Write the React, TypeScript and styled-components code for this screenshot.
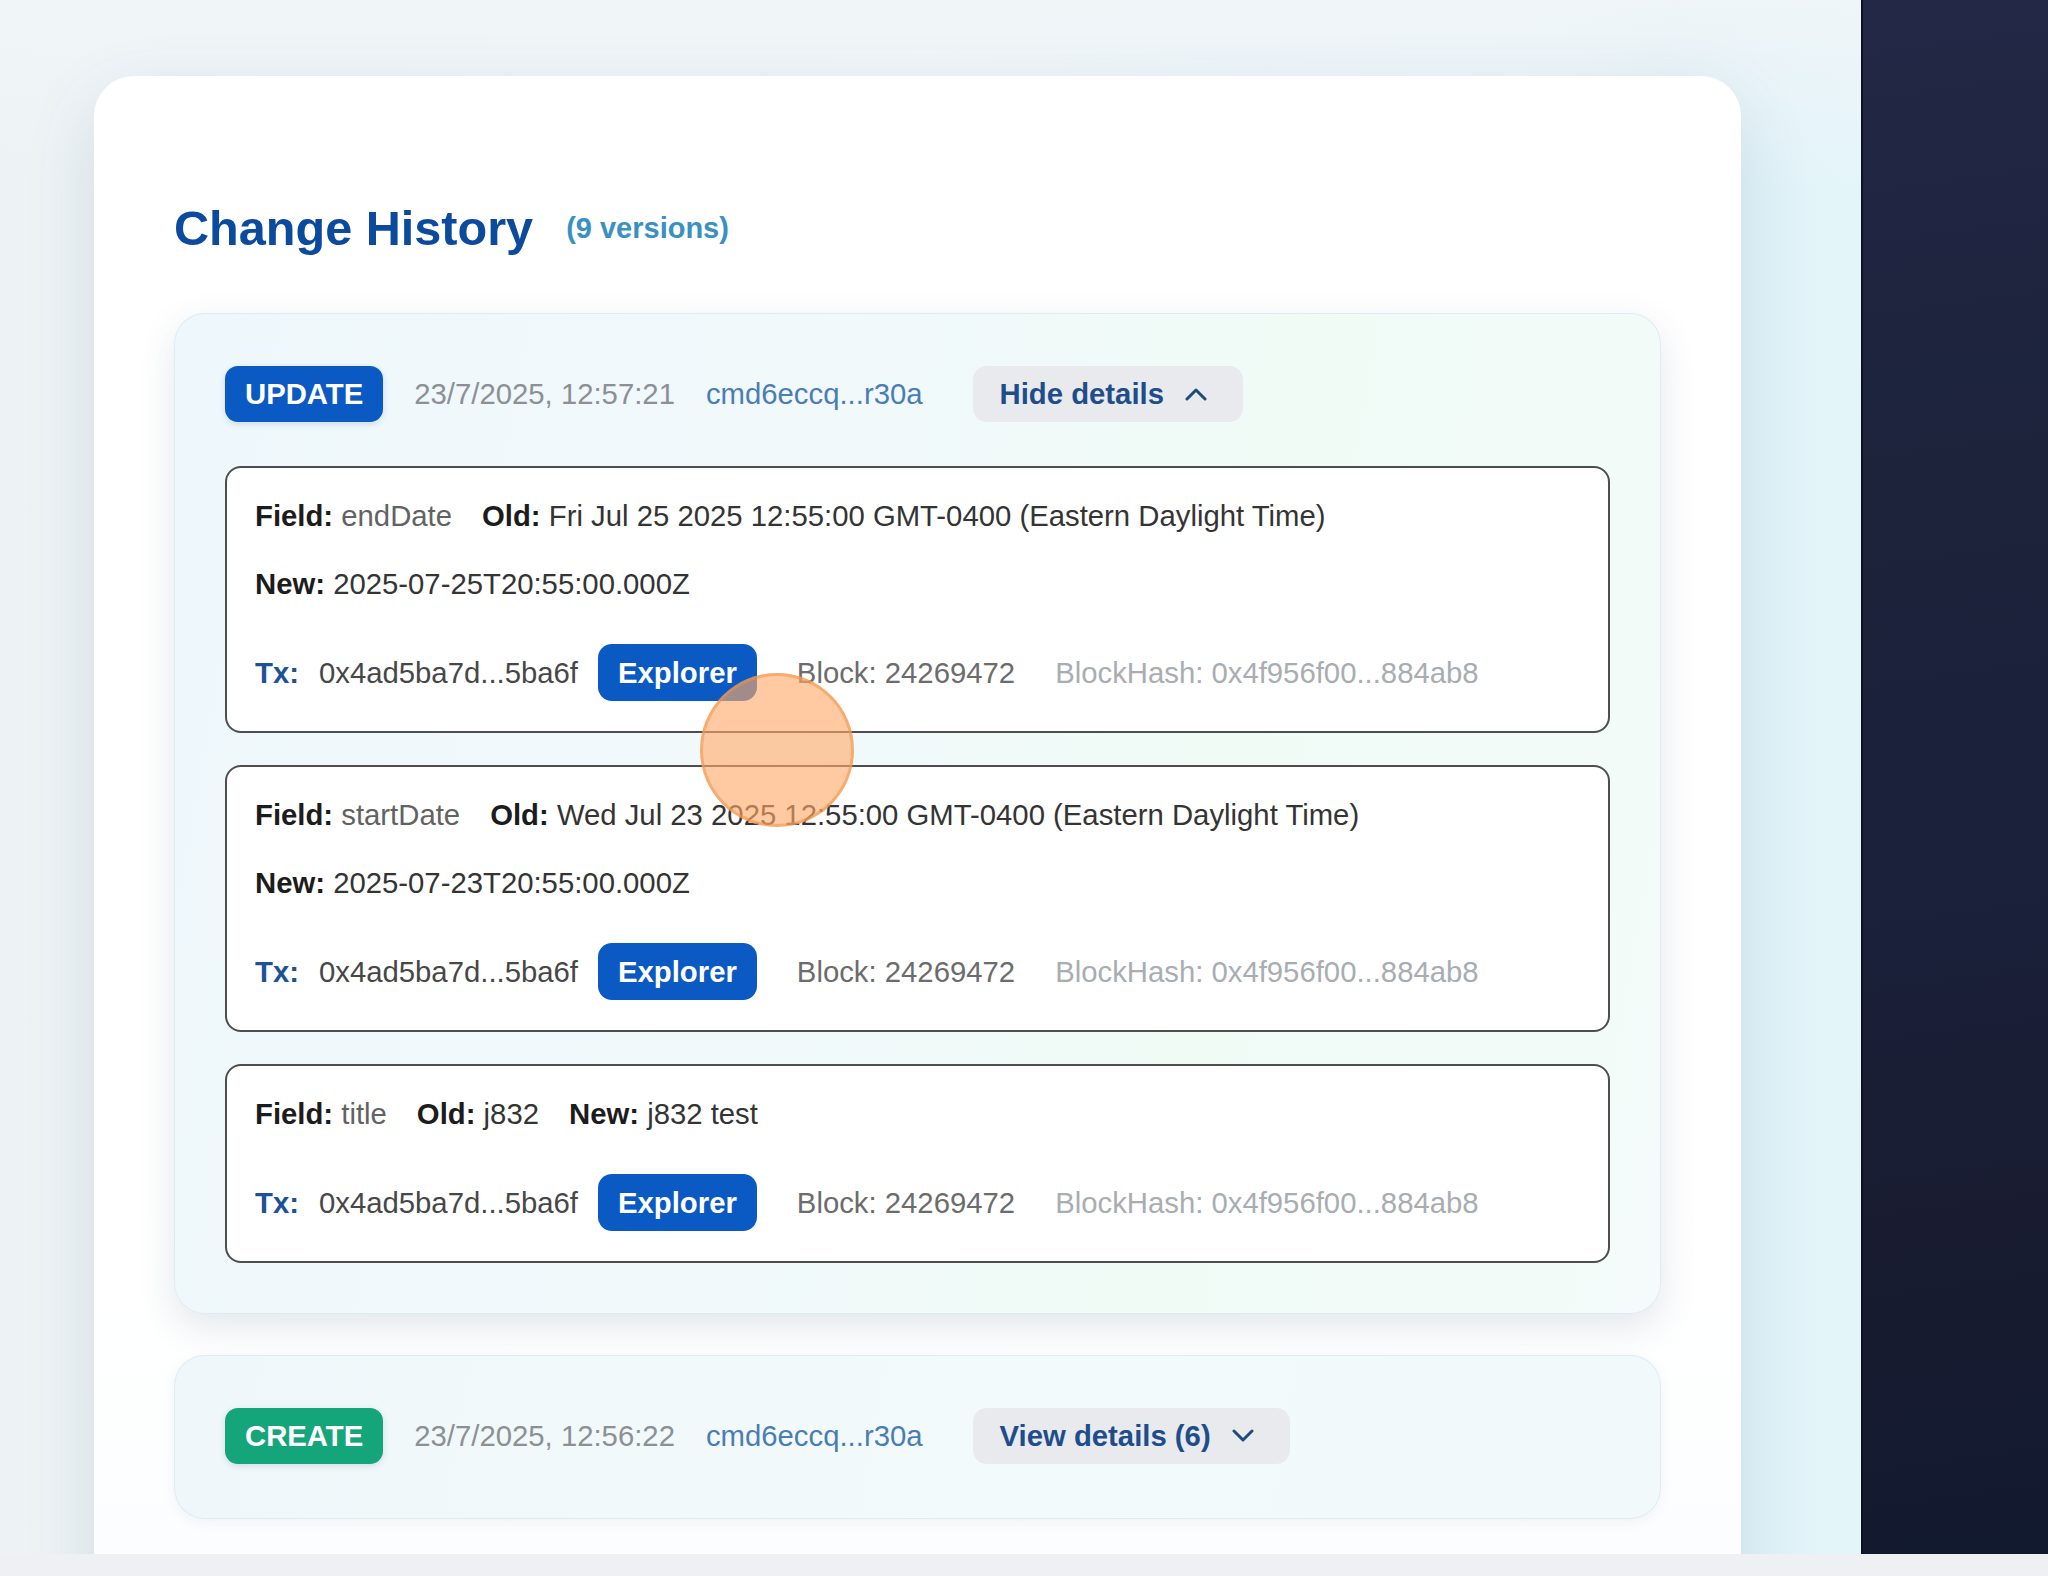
import React from "react";
import styled, { createGlobalStyle } from "styled-components";

const GlobalStyle = createGlobalStyle`
  html, body { margin: 0; padding: 0; }
  body {
    font-family: "Liberation Sans", Arial, sans-serif;
    background: #eef0f3;
  }
  * { box-sizing: border-box; }
`;

const FONT = `"Liberation Sans", Arial, sans-serif`;
const BODY_SIZE = "29.3px";

const Screen = styled.div`
  position: relative;
  width: 2048px;
  height: 1576px;
  display: flex;
  flex-direction: column;
  overflow: hidden;
  background: #eef0f3;
`;

const Stage = styled.div`
  display: flex;
  height: 1554px;
`;

const Canvas = styled.main`
  width: 1861px;
  height: 100%;
  padding: 76px 0 0 94px;
  overflow: hidden;
  background:
    linear-gradient(180deg, rgba(240, 245, 248, 0.9) 0%, rgba(240, 245, 248, 0) 12%),
    linear-gradient(90deg, #edf2f5 0%, #f0f5f8 50%, #e8f4f9 84%, #dff1f7 90%, #e4f5fa 100%);
`;

const SidePanel = styled.aside`
  flex: 1;
  background: linear-gradient(172deg, #232846 0%, #1c233b 30%, #1a2039 60%, #191c31 78%, #121a30 100%);
  border-left: 2px solid #0e1120;
`;

const BottomBar = styled.div`
  flex: 1;
  background: #eef0f3;
`;

const Panel = styled.section`
  width: 1647px;
  min-height: 1620px;
  background: linear-gradient(180deg, #ffffff 0%, #ffffff 70%, #fbfdfe 100%);
  border-radius: 40px;
  padding: 123px 80px 0;
  box-shadow: 0 24px 70px rgba(60, 100, 130, 0.14);
`;

const TitleRow = styled.div`
  display: flex;
  align-items: center;
  gap: 33px;
  margin-bottom: 56px;
`;

const Title = styled.h2`
  margin: 0;
  font-family: ${FONT};
  font-size: 48.6px;
  line-height: 58px;
  font-weight: 700;
  color: #0c4a9e;
`;

const VersionCount = styled.span`
  font-size: 29px;
  line-height: 34px;
  font-weight: 700;
  color: #3a90c2;
`;

const HistoryList = styled.div`
  display: flex;
  flex-direction: column;
  gap: 41px;
`;

const HistoryItem = styled.article<{ $expanded?: boolean }>`
  border-radius: 31px;
  padding: 52px 50px ${(p) => (p.$expanded ? "50px" : "54px")};
  border: 1px solid rgba(222, 233, 239, 0.9);
  background: ${(p) =>
    p.$expanded
      ? "linear-gradient(100deg, #eef7fb 0%, #f1f9fb 40%, #f0fbf6 68%, #f4fbfa 100%)"
      : "linear-gradient(100deg, #f0f7fa 0%, #f3fafb 55%, #f2f9fb 100%)"};
  box-shadow: ${(p) =>
    p.$expanded
      ? "0 12px 36px rgba(40, 70, 100, 0.13)"
      : "0 4px 14px rgba(40, 70, 100, 0.06)"};
`;

const ItemHeader = styled.div`
  display: flex;
  align-items: center;
  gap: 31px;
  height: 56px;
  font-size: ${BODY_SIZE};
`;

const ActionBadge = styled.span<{ $kind: "update" | "create" }>`
  display: inline-flex;
  align-items: center;
  height: 56px;
  padding: 0 20px;
  border-radius: 13px;
  background: ${(p) => (p.$kind === "update" ? "#0b5ac3" : "#14a67a")};
  color: #ffffff;
  font-weight: 700;
  font-size: ${BODY_SIZE};
  box-shadow: 0 2px 6px rgba(20, 60, 120, 0.15);
`;

const Timestamp = styled.span`
  color: #8c9095;
`;

const ActorId = styled.span`
  color: #4a7db5;
`;

const ToggleButton = styled.button`
  display: inline-flex;
  align-items: center;
  gap: 21px;
  height: 56px;
  margin-left: 19px;
  padding: 0 36px 0 27px;
  border: none;
  border-radius: 14px;
  background: #e8eaee;
  color: #1f4d8c;
  font-family: ${FONT};
  font-size: ${BODY_SIZE};
  font-weight: 700;
  cursor: pointer;
`;

const ChangeList = styled.div`
  display: flex;
  flex-direction: column;
  gap: 32px;
  margin-top: 44px;
`;

const ChangeCard = styled.div`
  background: #ffffff;
  border: 2px solid #4e4e4e;
  border-radius: 16px;
  padding: 28px 28px 30px;
`;

const FieldRow = styled.div`
  display: flex;
  flex-wrap: wrap;
  column-gap: 30px;
  row-gap: 28px;
  font-size: ${BODY_SIZE};
  line-height: 40px;
`;

const Entry = styled.span`
  white-space: nowrap;
`;

const Label = styled.b`
  color: #1c1c1c;
  font-weight: 700;
`;

const Value = styled.span<{ $muted?: boolean }>`
  color: ${(p) => (p.$muted ? "#626262" : "#343434")};
`;

const TxRow = styled.div`
  display: flex;
  align-items: center;
  gap: 20px;
  height: 57px;
  margin-top: 40px;
  font-size: ${BODY_SIZE};
`;

const TxLabel = styled.b`
  color: #1d5296;
  font-weight: 700;
`;

const TxHash = styled.span`
  color: #474747;
`;

const ExplorerButton = styled.button`
  display: inline-flex;
  align-items: center;
  height: 57px;
  padding: 0 20px;
  border: none;
  border-radius: 14px;
  background: #0b5ac3;
  color: #ffffff;
  font-family: ${FONT};
  font-size: ${BODY_SIZE};
  font-weight: 700;
  cursor: pointer;
`;

const ChainMeta = styled.span<{ $faint?: boolean }>`
  margin-left: 20px;
  color: ${(p) => (p.$faint ? "#a9adb2" : "#6c6c6c")};
`;

const TouchIndicator = styled.div`
  position: absolute;
  left: 700px;
  top: 673px;
  width: 154px;
  height: 154px;
  border-radius: 50%;
  background: rgba(255, 170, 105, 0.62);
  border: 3px solid rgba(240, 145, 70, 0.55);
  pointer-events: none;
`;

const Chevron = ({ up }: { up?: boolean }) => (
  <svg width="22" height="14" viewBox="0 0 22 14" fill="none">
    <path
      d={up ? "M2 12 L11 3 L20 12" : "M2 2 L11 11 L20 2"}
      stroke="#1f4a80"
      strokeWidth="3"
      strokeLinecap="round"
      strokeLinejoin="round"
    />
  </svg>
);

type Change = {
  field: string;
  oldValue: string;
  newValue: string;
};

const changes: Change[] = [
  {
    field: "endDate",
    oldValue: "Fri Jul 25 2025 12:55:00 GMT-0400 (Eastern Daylight Time)",
    newValue: "2025-07-25T20:55:00.000Z",
  },
  {
    field: "startDate",
    oldValue: "Wed Jul 23 2025 12:55:00 GMT-0400 (Eastern Daylight Time)",
    newValue: "2025-07-23T20:55:00.000Z",
  },
  { field: "title", oldValue: "j832", newValue: "j832 test" },
];

const ChangeEntry = ({ change }: { change: Change }) => (
  <ChangeCard>
    <FieldRow>
      <Entry>
        <Label>Field:</Label> <Value $muted>{change.field}</Value>
      </Entry>
      <Entry>
        <Label>Old:</Label> <Value>{change.oldValue}</Value>
      </Entry>
      <Entry>
        <Label>New:</Label> <Value>{change.newValue}</Value>
      </Entry>
    </FieldRow>
    <TxRow>
      <TxLabel>Tx:</TxLabel>
      <TxHash>0x4ad5ba7d...5ba6f</TxHash>
      <ExplorerButton>Explorer</ExplorerButton>
      <ChainMeta>Block: 24269472</ChainMeta>
      <ChainMeta $faint>BlockHash: 0x4f956f00...884ab8</ChainMeta>
    </TxRow>
  </ChangeCard>
);

export default function App() {
  return (
    <>
      <GlobalStyle />
      <Screen>
        <Stage>
          <Canvas>
            <Panel>
              <TitleRow>
                <Title>Change History</Title>
                <VersionCount>(9 versions)</VersionCount>
              </TitleRow>
              <HistoryList>
                <HistoryItem $expanded>
                  <ItemHeader>
                    <ActionBadge $kind="update">UPDATE</ActionBadge>
                    <Timestamp>23/7/2025, 12:57:21</Timestamp>
                    <ActorId>cmd6eccq...r30a</ActorId>
                    <ToggleButton>
                      Hide details <Chevron up />
                    </ToggleButton>
                  </ItemHeader>
                  <ChangeList>
                    {changes.map((c) => (
                      <ChangeEntry key={c.field} change={c} />
                    ))}
                  </ChangeList>
                </HistoryItem>
                <HistoryItem>
                  <ItemHeader>
                    <ActionBadge $kind="create">CREATE</ActionBadge>
                    <Timestamp>23/7/2025, 12:56:22</Timestamp>
                    <ActorId>cmd6eccq...r30a</ActorId>
                    <ToggleButton>
                      View details (6) <Chevron />
                    </ToggleButton>
                  </ItemHeader>
                </HistoryItem>
              </HistoryList>
            </Panel>
          </Canvas>
          <SidePanel />
        </Stage>
        <BottomBar />
        <TouchIndicator />
      </Screen>
    </>
  );
}
